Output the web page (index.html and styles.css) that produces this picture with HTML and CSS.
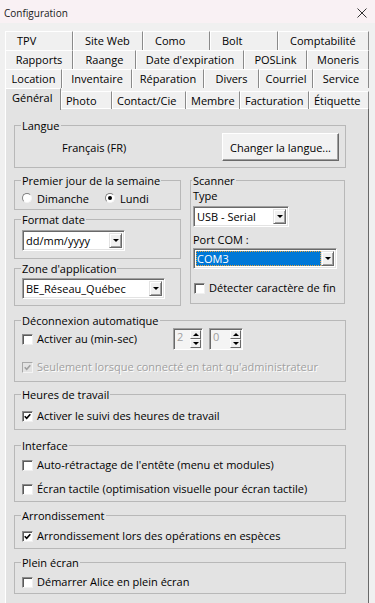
FILE: index.html
```html
<!DOCTYPE html>
<html>
<head>
    <meta charset="utf-8">
    <title>Configuration</title>
    <link rel="stylesheet" href="styles.css">
</head>
<body>
    <div class="titlebar">
        <span class="title">Configuration</span>
        <svg class="close" width="10" height="10" viewBox="0 0 10 10"><path d="M0.5 0.5L9.5 9.5M9.5 0.5L0.5 9.5"/></svg>
    </div>

    <div class="client">
        <div class="tabs">
            <div class="tabrow row1">
                <span class="tab">TPV</span>
                <span class="tab">Site Web</span>
                <span class="tab">Como</span>
                <span class="tab">Bolt</span>
                <span class="tab">Comptabilité</span>
            </div>
            <div class="tabrow row2">
                <span class="tab">Rapports</span>
                <span class="tab">Raange</span>
                <span class="tab">Date d'expiration</span>
                <span class="tab">POSLink</span>
                <span class="tab">Moneris</span>
            </div>
            <div class="tabrow row3">
                <span class="tab">Location</span>
                <span class="tab">Inventaire</span>
                <span class="tab">Réparation</span>
                <span class="tab">Divers</span>
                <span class="tab">Courriel</span>
                <span class="tab">Service</span>
            </div>
            <div class="tabrow row4">
                <span class="tab active">Général</span>
                <span class="tab">Photo</span>
                <span class="tab">Contact/Cie</span>
                <span class="tab">Membre</span>
                <span class="tab">Facturation</span>
                <span class="tab">Étiquette</span>
            </div>
        </div>

        <div class="page">
            <fieldset class="group lang">
                <legend>Langue</legend>
                <div class="lang-row">
                    <span class="lang-name">Français (FR)</span>
                    <button class="btn">Changer la langue...</button>
                </div>
            </fieldset>

            <div class="cols">
                <div class="col-left">
                    <fieldset class="group week">
                        <legend>Premier jour de la semaine</legend>
                        <div class="radios">
                            <span class="radio first"><span class="dot"></span>Dimanche</span>
                            <span class="radio"><span class="dot on"></span>Lundi</span>
                        </div>
                    </fieldset>

                    <fieldset class="group fmt">
                        <legend>Format date</legend>
                        <div class="combo">
                            <span class="combo-text">dd/mm/yyyy</span>
                            <span class="combo-btn"></span>
                        </div>
                    </fieldset>

                    <fieldset class="group zone">
                        <legend>Zone d'application</legend>
                        <div class="combo">
                            <span class="combo-text">BE_Réseau_Québec</span>
                            <span class="combo-btn"></span>
                        </div>
                    </fieldset>
                </div>

                <fieldset class="group scanner">
                    <legend>Scanner</legend>
                    <div class="field-label">Type</div>
                    <div class="combo type">
                        <span class="combo-text">USB - Serial</span>
                        <span class="combo-btn"></span>
                    </div>
                    <div class="field-label port">Port COM :</div>
                    <div class="combo port-combo">
                        <span class="combo-text selected">COM3</span>
                        <span class="combo-btn"></span>
                    </div>
                    <label class="check end-char"><span class="box"></span>Détecter caractère de fin</label>
                </fieldset>
            </div>

            <fieldset class="group logout">
                <legend>Déconnexion automatique</legend>
                <div class="logout-row">
                    <label class="check timer"><span class="box"></span>Activer au (min-sec)</label>
                    <div class="spin min">
                        <span class="spin-val">2</span>
                        <span class="spin-btns"><span class="spin-up"></span><span class="spin-down"></span></span>
                    </div>
                    <div class="spin sec">
                        <span class="spin-val">0</span>
                        <span class="spin-btns"><span class="spin-up"></span><span class="spin-down"></span></span>
                    </div>
                </div>
                <label class="check disabled admin"><span class="box"><svg width="7" height="7" viewBox="0 0 7 7"><path d="M0.7 3.2L2.7 5.3L6.3 1.2"/></svg></span>Seulement lorsque connecté en tant qu'administrateur</label>
            </fieldset>

            <fieldset class="group hours">
                <legend>Heures de travail</legend>
                <label class="check"><span class="box"><svg width="7" height="7" viewBox="0 0 7 7"><path d="M0.7 3.2L2.7 5.3L6.3 1.2"/></svg></span>Activer le suivi des heures de travail</label>
            </fieldset>

            <fieldset class="group iface">
                <legend>Interface</legend>
                <label class="check"><span class="box"></span>Auto-rétractage de l'entête (menu et modules)</label>
                <label class="check"><span class="box"></span>Écran tactile (optimisation visuelle pour écran tactile)</label>
            </fieldset>

            <fieldset class="group round">
                <legend>Arrondissement</legend>
                <label class="check"><span class="box"><svg width="7" height="7" viewBox="0 0 7 7"><path d="M0.7 3.2L2.7 5.3L6.3 1.2"/></svg></span>Arrondissement lors des opérations en espèces</label>
            </fieldset>

            <fieldset class="group full">
                <legend>Plein écran</legend>
                <label class="check"><span class="box"></span>Démarrer Alice en plein écran</label>
            </fieldset>
        </div>
    </div>
</body>
</html>
```

FILE: styles.css
```css
body {
    margin: 0;
    background: #f0f0f0;
    font-family: "Open Sans", "Noto Sans", sans-serif;
    font-size: 11px;
    color: #000;
    overflow: hidden;
}

/* title bar */
.titlebar {
    height: 23px;
    background: #f9f1f4;
    display: flex;
    align-items: center;
    justify-content: space-between;
    padding: 0 8px 0 4px;
}
.title { font-size: 10px; line-height: 14px; margin-top: 3px; color: #1a1a1a; }
.close { margin-top: 3px; }
.close path { stroke: #333; stroke-width: 1; fill: none; }

/* tabs */
.client { padding-top: 8px; }
.tabs { margin-left: 5px; width: 364px; }
.tabrow { display: grid; height: 19px; }
.row1 { grid-template-columns: 68px 70px 67px 68px 91px; }
.row2 { grid-template-columns: 68px 63px 108px 63px 62px; }
.row3 { grid-template-columns: 57px 70px 72px 55px 54px 56px; }
.row4 { grid-template-columns: 56px 51px 74px 54px 69px 60px; height: 20px; align-items: end; }
.tab {
    box-sizing: border-box;
    height: 19px;
    border-top: 1px solid #fff;
    border-left: 1px solid #fff;
    border-right: 1px solid #8a8a8a;
    line-height: 17px;
    white-space: nowrap;
    overflow: hidden;
    text-align: center;
}
.row1 .tab { text-align: left; padding-left: 11px; }
.row4 .tab { height: 18px; text-align: left; padding-left: 4px; }
.row4 .tab.active {
    position: relative;
    z-index: 1;
    height: 22px;
    margin-bottom: -1px;
    padding-left: 6px;
    background: #e3e3e3;
}

/* tab page */
.page {
    box-sizing: border-box;
    margin-left: 5px;
    width: 364px;
    height: 500px;
    background: #e3e3e3;
    border-top: 1px solid #fff;
    border-left: 1px solid #fff;
    border-right: 1px solid #696969;
    padding: 8px 22px 0 8px;
}

.group {
    margin: 0;
    min-width: 0;
    border: 1px solid #b8b8b8;
    padding: 0 6px 0 7px;
}
.group legend { padding: 2px 1px 0; margin-left: -1px; line-height: 14px; }

.lang { padding-bottom: 6px; }
.lang-row { display: flex; align-items: center; }
.lang-name { margin-left: 40px; }
.btn {
    font: inherit;
    color: #000;
    box-sizing: border-box;
    width: 117px;
    height: 28px;
    margin-left: auto;
    padding: 0;
    background: #f2f2f2;
    border: 1px solid;
    border-color: #fff #696969 #696969 #fff;
    box-shadow: inset -1px -1px 0 #a0a0a0;
}

.cols {
    display: grid;
    grid-template-columns: 167px 155px;
    column-gap: 9px;
    align-items: start;
    margin-top: 4px;
}
.week { padding-top: 2px; padding-bottom: 3px; }
.fmt { margin-top: 1px; padding-top: 3px; padding-bottom: 7px; }
.zone { margin-top: 1px; padding-top: 2px; padding-bottom: 6px; }
.scanner { padding: 1px 4px 8px 2px; }

.radios { display: flex; height: 16px; align-items: center; }
.radio { display: flex; align-items: center; gap: 5px; }
.radio.first { width: 83px; }
.dot {
    box-sizing: border-box;
    width: 10px;
    height: 10px;
    border-radius: 50%;
    background: #fff;
    border: 1px solid;
    border-color: #808080 #f4f4f4 #f4f4f4 #808080;
    display: flex;
    align-items: center;
    justify-content: center;
}
.dot.on::after { content: ""; width: 4px; height: 4px; border-radius: 50%; background: #000; }

/* combo boxes */
.combo {
    box-sizing: border-box;
    height: 21px;
    display: flex;
    background: #fff;
    border: 1px solid;
    border-color: #a0a0a0 #fff #fff #a0a0a0;
    box-shadow: inset 1px 1px 0 #696969, inset -1px -1px 0 #e3e3e3;
    padding: 2px;
}
.fmt .combo { width: 103px; }
.zone .combo { width: 143px; }
.combo.type { width: 96px; margin-top: 3px; }
.combo.port-combo { width: 144px; margin-top: 1px; }
.combo-text { flex: 1; line-height: 15px; padding-left: 1px; white-space: nowrap; overflow: hidden; }
.combo-text.selected {
    background: #0078d7;
    color: #fff;
    outline: 1px dotted #e8a33c;
    outline-offset: -1px;
}
.combo-btn {
    box-sizing: border-box;
    width: 13px;
    background: #f0f0f0;
    border: 1px solid;
    border-color: #e3e3e3 #696969 #696969 #e3e3e3;
    box-shadow: inset 1px 1px 0 #fff, inset -1px -1px 0 #a0a0a0;
    display: flex;
    align-items: center;
    justify-content: center;
}
.combo-btn::after {
    content: "";
    border-left: 3px solid transparent;
    border-right: 3px solid transparent;
    border-top: 3px solid #000;
}

.field-label { line-height: 14px; }
.field-label.port { margin-top: 6px; }

/* check boxes */
.check { display: flex; align-items: center; gap: 4px; line-height: 14px; white-space: nowrap; }
.box {
    box-sizing: border-box;
    flex: none;
    width: 11px;
    height: 11px;
    background: #fff;
    border: 1px solid;
    border-color: #8c8c8c #f0f0f0 #f0f0f0 #8c8c8c;
    box-shadow: inset 1px 1px 0 #5a5a5a;
    display: flex;
    align-items: center;
    justify-content: center;
}
.box path { fill: none; stroke: #000; stroke-width: 1.6; }
.check.disabled { color: #a0a0a0; text-shadow: 1px 1px 0 #fff; }
.check.disabled .box { background: #e3e3e3; border-color: #a8a8a8 #f4f4f4 #f4f4f4 #a8a8a8; box-shadow: none; }
.check.disabled path { stroke: #a0a0a0; }
.check.end-char { margin-top: 12px; margin-left: 1px; }

/* auto logout */
.logout { margin-top: 6px; padding-bottom: 7px; }
.logout-row { display: flex; align-items: center; gap: 6px; }
.check.timer { width: 145px; }
.admin { margin-top: 10px; }
.spin {
    box-sizing: border-box;
    display: flex;
    height: 22px;
    border: 1px solid;
    border-color: #a0a0a0 #fff #fff #a0a0a0;
    box-shadow: inset 1px 1px 0 #696969;
    background: #f4f4f4;
    padding: 1px;
}
.spin.min { width: 30px; }
.spin.sec { width: 34px; }
.spin-val { flex: 1; color: #a0a0a0; line-height: 14px; padding-left: 2px; }
.spin-btns { width: 11px; display: flex; flex-direction: column; }
.spin-btns span {
    flex: 1;
    background: #f0f0f0;
    border: 1px solid;
    border-color: #fff #696969 #696969 #fff;
    display: flex;
    align-items: center;
    justify-content: center;
}
.spin-up::after { content: ""; border-left: 3px solid transparent; border-right: 3px solid transparent; border-bottom: 3px solid #000; }
.spin-down::after { content: ""; border-left: 3px solid transparent; border-right: 3px solid transparent; border-top: 3px solid #000; }

.hours { margin-top: 4px; padding-top: 7px; padding-bottom: 6px; }
.iface { margin-top: 7px; padding-top: 5px; padding-bottom: 5px; }
.iface .check + .check { margin-top: 10px; }
.round { margin-top: 5px; padding-top: 6px; padding-bottom: 5px; }
.full { margin-top: 5px; padding-top: 5px; padding-bottom: 4px; }
```
